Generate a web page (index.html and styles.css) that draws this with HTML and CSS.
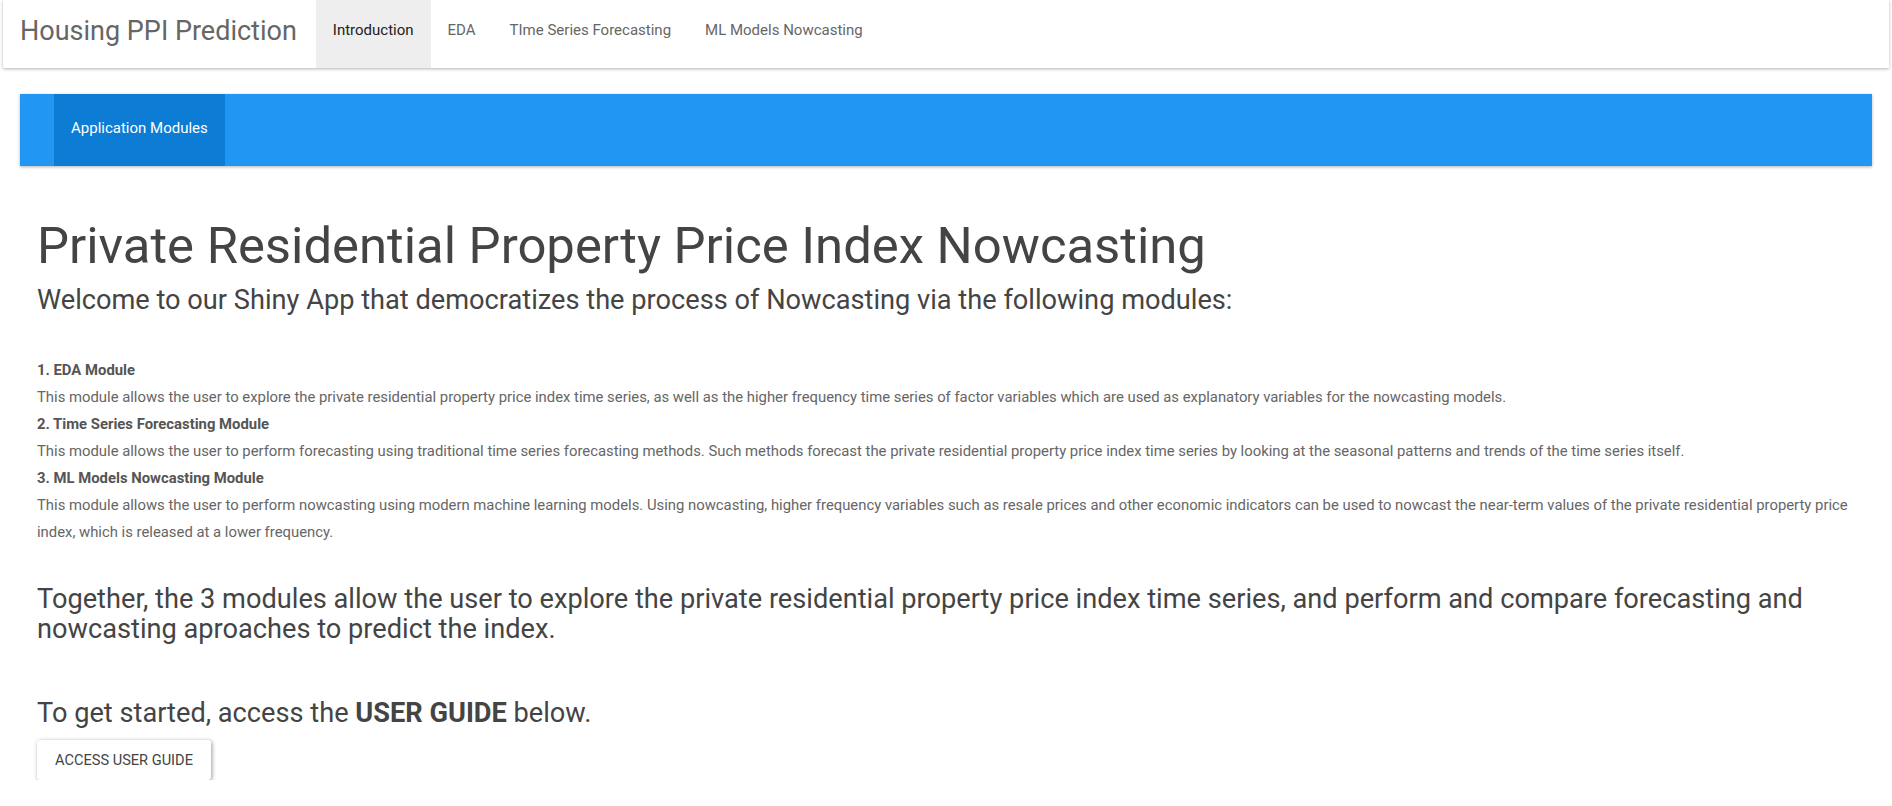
FILE: index.html
```html
<!DOCTYPE html>
<html lang="en">
<head>
<meta charset="utf-8">
<title>Housing PPI Prediction</title>
<link rel="stylesheet" href="styles.css">
</head>
<body>
<nav class="topbar">
  <div class="brand">Housing PPI Prediction</div>
  <ul class="topnav">
    <li class="active"><a>Introduction</a></li>
    <li><a>EDA</a></li>
    <li><a>TIme Series Forecasting</a></li>
    <li><a>ML Models Nowcasting</a></li>
  </ul>
</nav>
<main class="main">
  <nav class="subbar">
    <ul class="subnav">
      <li class="active"><a>Application Modules</a></li>
    </ul>
  </nav>
  <section class="content">
    <h1 class="title">Private Residential Property Price Index Nowcasting</h1>
    <h3 class="lead">Welcome to our Shiny App that democratizes the process of Nowcasting via the following modules:</h3>
    <div class="modules">
      <div class="mod-name">1. EDA Module</div>
      <div class="mod-desc">This module allows the user to explore the private residential property price index time series, as well as the higher frequency time series of factor variables which are used as explanatory variables for the nowcasting models.</div>
      <div class="mod-name">2. Time Series Forecasting Module</div>
      <div class="mod-desc">This module allows the user to perform forecasting using traditional time series forecasting methods. Such methods forecast the private residential property price index time series by looking at the seasonal patterns and trends of the time series itself.</div>
      <div class="mod-name">3. ML Models Nowcasting Module</div>
      <div class="mod-desc">This module allows the user to perform nowcasting using modern machine learning models. Using nowcasting, higher frequency variables such as resale prices and other economic indicators can be used to nowcast the near-term values of the private residential property price index, which is released at a lower frequency.</div>
    </div>
    <h3 class="together">Together, the 3 modules allow the user to explore the private residential property price index time series, and perform and compare forecasting and nowcasting aproaches to predict the index.</h3>
    <h3 class="started">To get started, access the <b>USER GUIDE</b> below.</h3>
    <button class="btn" type="button">Access User Guide</button>
  </section>
</main>
</body>
</html>
```
FILE: styles.css
```css
* { box-sizing: border-box; }
html, body { margin: 0; padding: 0; background: #fff; }
body {
  font-family: Roboto, "Noto Sans", "Liberation Sans", sans-serif;
  color: #666;
  font-size: 15px;
}
ul { list-style: none; margin: 0; padding: 0; }
a { text-decoration: none; cursor: pointer; }

.topbar {
  display: flex;
  align-items: flex-start;
  height: 68px;
  margin: 0 3px;
  background: #fff;
  box-shadow: 0 1px 3px rgba(0, 0, 0, 0.3);
}
.brand {
  padding: 18px 19px 0 17px;
  font-size: 27px;
  line-height: 27px;
  color: #666;
  height: 68px;
}
.topnav { display: flex; }
.topnav a {
  display: block;
  padding: 20px 17px 27px;
  line-height: 21px;
  font-size: 15px;
  color: #666;
}
.topnav .active a { background: #eee; color: #212121; }

.main { padding: 26px 20px 0; }
.subbar {
  display: flex;
  height: 72px;
  padding-left: 34px;
  background: #2196f3;
  box-shadow: 0 1px 3px rgba(0, 0, 0, 0.3);
}
.subnav { display: flex; }
.subnav a {
  display: block;
  padding: 24px 17px 27px;
  line-height: 21px;
  font-size: 15px;
  color: #fff;
}
.subnav .active a { background: #0c7cd5; }

.content { padding: 0 8px 0 17px; }
.title {
  margin: 52px 0 0;
  font-size: 50.8px;
  line-height: 1.1;
  font-weight: 400;
  color: #444;
}
.lead {
  margin: 12px 0 0;
  font-size: 27.2px;
  line-height: 1.1;
  font-weight: 400;
  color: #444;
}
.modules {
  margin-top: 41px;
  font-size: 14.85px;
  line-height: 27px;
  color: #666;
}
.mod-name { font-weight: 700; color: #555; }
.together {
  margin: 39px 0 0;
  font-size: 27.2px;
  line-height: 1.1;
  font-weight: 400;
  color: #444;
}
.started {
  margin: 54px 0 0;
  font-size: 27.2px;
  line-height: 1.1;
  font-weight: 400;
  color: #444;
}
.started b { font-weight: 700; }
.btn {
  margin-top: 11px;
  height: 40px;
  padding: 0 18px;
  border: none;
  border-radius: 3px;
  background: #fff;
  color: #444;
  font-family: inherit;
  font-size: 14.6px;
  text-transform: uppercase;
  box-shadow: 1px 1px 4px rgba(0, 0, 0, 0.4);
}
```
